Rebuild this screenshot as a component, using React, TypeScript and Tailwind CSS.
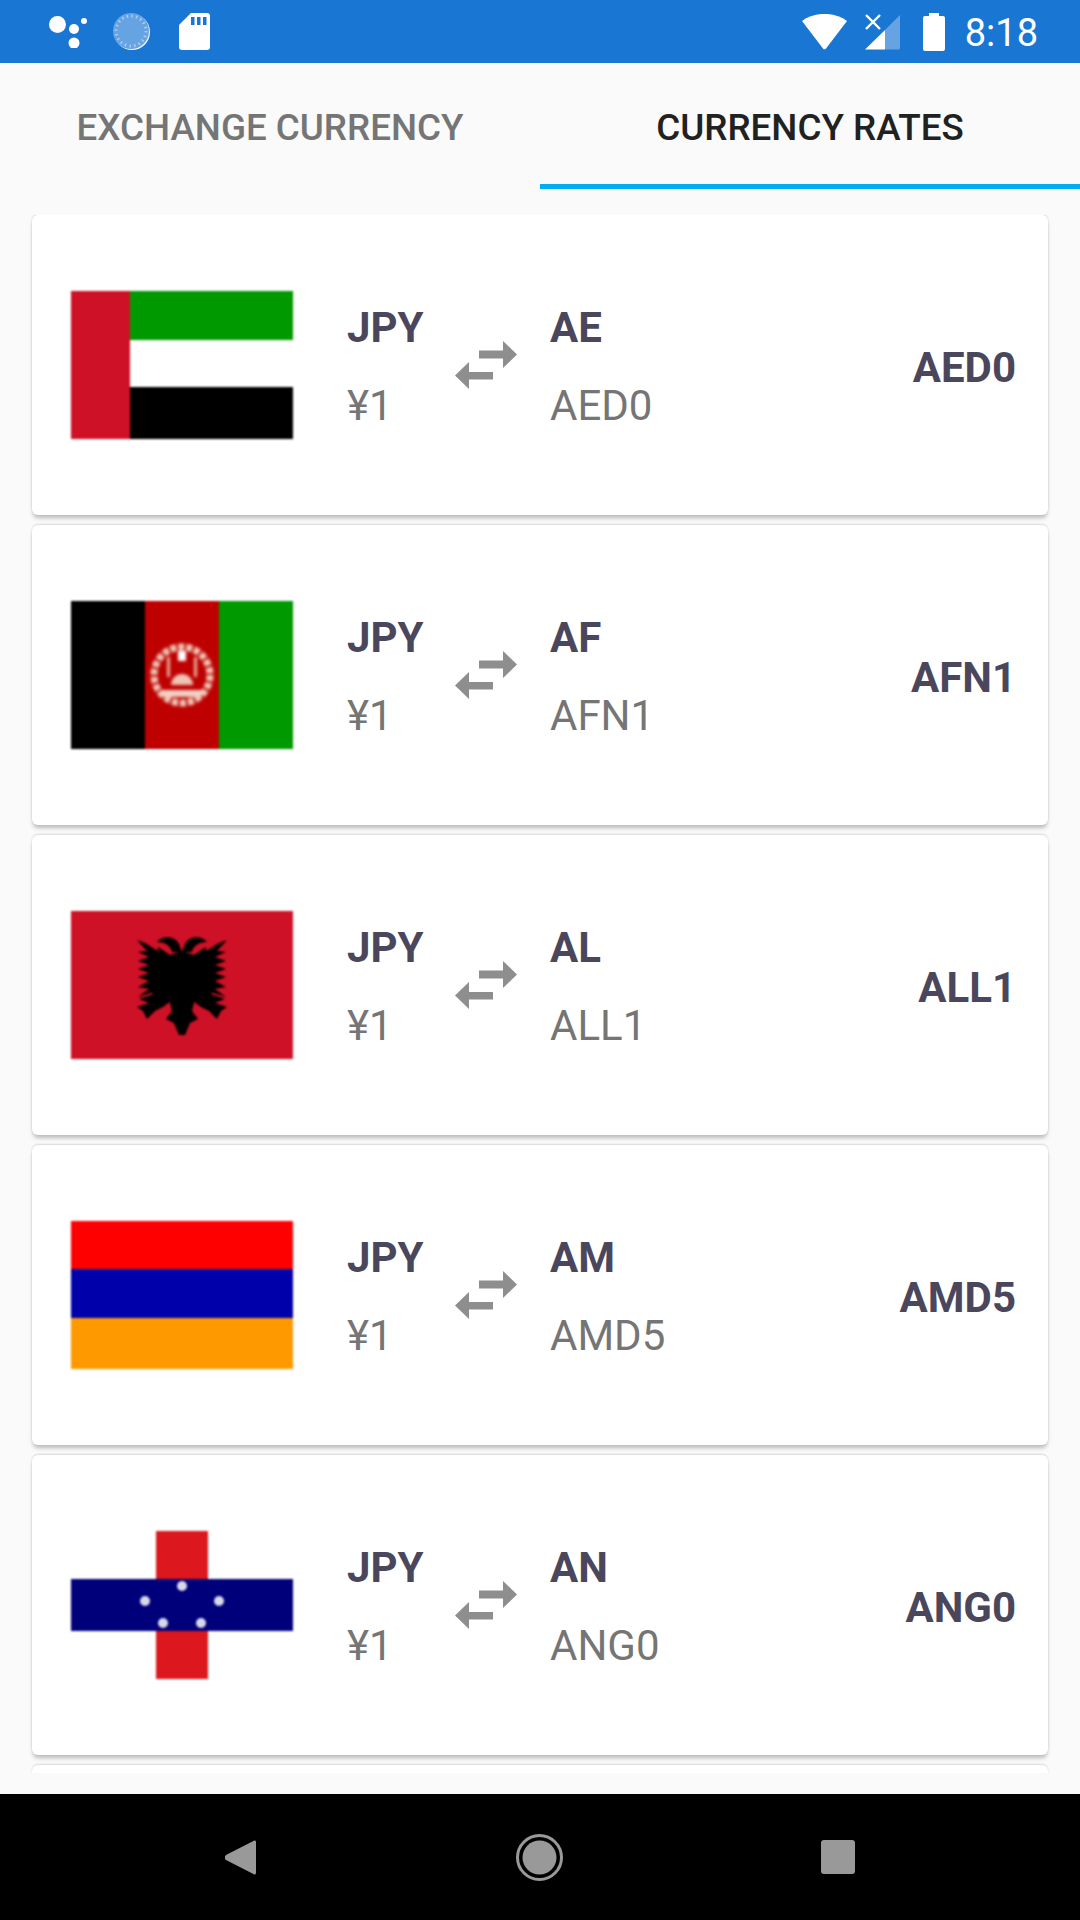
import React from 'react';

const UaeFlag = () => (
  <svg viewBox="0 0 222 148" className="w-full h-full">
    <rect x="59" y="0" width="163" height="49" fill="#009900" />
    <rect x="59" y="49" width="163" height="47" fill="#ffffff" />
    <rect x="59" y="96" width="163" height="52" fill="#000000" />
    <rect x="0" y="0" width="59" height="148" fill="#ce1126" />
  </svg>
);

const AfghanFlag = () => (
  <svg viewBox="0 0 222 148" className="w-full h-full">
    <rect x="0" y="0" width="74" height="148" fill="#000000" />
    <rect x="74" y="0" width="74" height="148" fill="#be0000" />
    <rect x="148" y="0" width="74" height="148" fill="#009900" />
    {/* emblem */}
    <g className="blur-[1px]">
      <circle cx="111" cy="74" r="28" fill="none" stroke="#f0c8b8" strokeWidth="7" strokeDasharray="6 2" />
      <path d="M92 96 h38 l3 -7 h-44 z" fill="#f3d0c4" />
      <path d="M107 50 h8 v10 h-8 z" fill="#ffffff" />
      <path d="M100 84 a11 11 0 0 1 22 0 z" fill="#eec4b4" />
      <rect x="96" y="56" width="3" height="20" fill="#e8b0a0" />
      <rect x="123" y="56" width="3" height="20" fill="#e8b0a0" />
    </g>
  </svg>
);

const AlbaniaFlag = () => (
  <svg viewBox="0 0 222 148" className="w-full h-full">
    <rect width="222" height="148" fill="#ce1126" />
    {/* heads */}
    <path d="M86 31 C92 24 104 25 108 33 L111 41 L114 33 C118 25 130 24 136 31 C128 31 122 35 121 41 L101 41 C100 35 94 31 86 31 Z" fill="#000" />
    {/* body */}
    <path d="M87 36 L99 44 L111 40 L123 44 L135 36 L136 78 L124 88 L121 100 L127 108 L119 112 L114 124 L108 124 L103 112 L95 108 L101 100 L98 88 L86 78 Z" fill="#000" />
    {/* left wing */}
    <path d="M66 29 L74 32 L90 42 L92 82 L80 82 L67 86 L78 78 L67 76 L78 70 L67 66 L78 62 L67 58 L78 54 L67 50 L78 46 L67 41 L76 40 Z" fill="#000" />
    <path d="M90 76 L100 90 L92 96 L84 100 L76 108 L72 100 L66 96 L78 92 L68 88 L80 84 Z" fill="#000" />
    {/* right wing */}
    <path d="M156 29 L148 32 L132 42 L130 82 L142 82 L155 86 L144 78 L155 76 L144 70 L155 66 L144 62 L155 58 L144 54 L155 50 L144 46 L155 41 L146 40 Z" fill="#000" />
    <path d="M132 76 L122 90 L130 96 L138 100 L146 108 L150 100 L156 96 L144 92 L154 88 L142 84 Z" fill="#000" />
  </svg>
);

const ArmeniaFlag = () => (
  <svg viewBox="0 0 222 148" className="w-full h-full">
    <rect y="0" width="222" height="48" fill="#ff0000" />
    <rect y="48" width="222" height="49" fill="#0000aa" />
    <rect y="97" width="222" height="51" fill="#ff9900" />
  </svg>
);

const AntillesFlag = () => (
  <svg viewBox="0 0 222 148" className="w-full h-full">
    <rect x="85" y="0" width="52" height="148" fill="#dc171d" />
    <rect x="0" y="48" width="222" height="52" fill="#00007b" />
    {[[111, 55], [74, 70], [148, 70], [92, 92], [130, 92]].map(([cx, cy]) => (
      <circle key={`${cx}-${cy}`} cx={cx} cy={cy} r="5" fill="#d8d8ea" />
    ))}
  </svg>
);

const rates = [
  { code: 'AE', rate: 'AED0', Flag: UaeFlag },
  { code: 'AF', rate: 'AFN1', Flag: AfghanFlag },
  { code: 'AL', rate: 'ALL1', Flag: AlbaniaFlag },
  { code: 'AM', rate: 'AMD5', Flag: ArmeniaFlag },
  { code: 'AN', rate: 'ANG0', Flag: AntillesFlag },
];

const SwapIcon = () => (
  <svg viewBox="0 0 62 48" className="w-[62px] h-[48px]" fill="#8e8e8e">
    <path d="M24 9.5 H48 V0 L62 13.5 L48 27 V17.5 H24 Z" />
    <path d="M38 31 H14 V21 L0 34.5 L14 48 V38.5 H38 Z" />
  </svg>
);

const StatusBar = () => (
  <div className="h-[63px] bg-[#1976d2] flex items-center text-white">
    <svg viewBox="0 0 38 32" className="w-[38px] h-[32px] ml-[49px]" fill="#fff">
      <circle cx="8.5" cy="8.5" r="8.5" />
      <circle cx="25" cy="13" r="5" />
      <circle cx="25" cy="27" r="5.5" />
      <circle cx="35" cy="5" r="3" />
    </svg>
    <svg viewBox="0 0 37 37" className="w-[37px] h-[37px] ml-[26px]">
      <circle cx="19" cy="19" r="18" fill="#fff" opacity="0.95" />
      <circle cx="18" cy="18" r="18" fill="#66a3e3" />
      <circle cx="18" cy="18" r="15" fill="none" stroke="#a9cbf0" strokeWidth="3" strokeDasharray="1.5 3.2" />
    </svg>
    <svg viewBox="0 0 31 37" className="w-[31px] h-[37px] ml-[29px]">
      <path d="M12 0 H28 a3 3 0 0 1 3 3 V34 a3 3 0 0 1 -3 3 H3 a3 3 0 0 1 -3 -3 V12 Z" fill="#fff" />
      <rect x="12" y="4" width="3.5" height="8" fill="#1976d2" />
      <rect x="18" y="4" width="3.5" height="8" fill="#1976d2" />
      <rect x="24" y="4" width="3.5" height="8" fill="#1976d2" />
    </svg>
    <div className="flex-1" />
    <svg viewBox="0 0 45 36" className="w-[45px] h-[36px]">
      <path d="M0 7 C12 -2.5 33 -2.5 45 7 L24 34.5 a2 2 0 0 1 -3 0 Z" fill="#fff" />
    </svg>
    <svg viewBox="0 0 35 36" className="w-[35px] h-[36px] ml-[18px]">
      <path d="M35 1 V34 a1.5 1.5 0 0 1 -1.5 1.5 H20 V16 Z" fill="#66a3e3" />
      <path d="M20 16 V35.5 H0 Z" fill="#fff" />
      <path d="M1 1 L15 15 M15 1 L1 15" stroke="#fff" strokeWidth="2.4" />
    </svg>
    <svg viewBox="0 0 22 38" className="w-[22px] h-[38px] ml-[23px]" fill="#fff">
      <path d="M6 0 H16 V3 H20 a2 2 0 0 1 2 2 V36 a2 2 0 0 1 -2 2 H2 a2 2 0 0 1 -2 -2 V5 a2 2 0 0 1 2 -2 H6 Z" />
    </svg>
    <span className="ml-[20px] mr-[42px] pt-[3px] text-[38px] leading-none">8:18</span>
  </div>
);

const Tabs = () => (
  <div className="flex h-[126px] text-[36.75px] font-medium leading-none">
    <div className="w-[540px] flex items-center justify-center text-[#757575] pt-[4px]">EXCHANGE CURRENCY</div>
    <div className="w-[540px] flex items-center justify-center text-[#212121] border-b-[5px] border-[#00adf2] pt-[9px]">CURRENCY RATES</div>
  </div>
);

const RateCard = ({ code, rate, Flag }: (typeof rates)[number]) => (
  <div className="h-[300px] shrink-0 bg-white rounded-[6px] shadow-[0_4px_4px_-1px_rgba(0,0,0,0.26),0_-1px_2px_rgba(0,0,0,0.14)] flex items-center pl-[39px] pr-[32px]">
    <div className="w-[222px] h-[148px] blur-[0.8px]">
      <Flag />
    </div>
    <div className="w-[108px] ml-[54px] pt-[4px] text-[42px] leading-[78px]">
      <div className="font-bold text-[#4a475c]">JPY</div>
      <div className="text-[#757575]">¥1</div>
    </div>
    <SwapIcon />
    <div className="ml-[33px] pt-[4px] text-[42px] leading-[78px]">
      <div className="font-bold text-[#4a475c]">{code}</div>
      <div className="text-[#757575]">{rate}</div>
    </div>
    <div className="ml-auto pt-[5px] text-[42px] font-bold text-[#4a475c]">{rate}</div>
  </div>
);

const NavBar = () => (
  <div className="h-[126px] bg-black flex items-center">
    <svg viewBox="0 0 31 35" className="w-[31px] h-[35px] ml-[225px]" fill="#999">
      <path d="M31 2 V33 a1.5 1.5 0 0 1 -2.6 1 L1 20 a3.5 3.5 0 0 1 0 -5 L28.4 1 a1.5 1.5 0 0 1 2.6 1 Z" />
    </svg>
    <svg viewBox="0 0 47 47" className="w-[47px] h-[47px] ml-[260px]">
      <circle cx="23.5" cy="23.5" r="22" fill="none" stroke="#999" strokeWidth="3" />
      <circle cx="23.5" cy="23.5" r="17" fill="#999" />
    </svg>
    <div className="w-[34px] h-[34px] ml-[258px] bg-[#999] rounded-[3px]" />
  </div>
);

export default function App() {
  return (
    <div className="w-[1080px] h-[1920px] bg-[#fafafa] flex flex-col font-['Roboto',sans-serif]">
      <StatusBar />
      <Tabs />
      <div className="h-[1605px] pt-[26px] pb-[21px] flex flex-col">
        <div className="flex-1 overflow-hidden px-[32px] flex flex-col gap-[10px]">
          {rates.map((r) => (
            <RateCard key={r.code} {...r} />
          ))}
          <div className="h-[300px] shrink-0 bg-white rounded-[6px] shadow-[0_-1px_2px_rgba(0,0,0,0.14)]" />
        </div>
      </div>
      <NavBar />
    </div>
  );
}
